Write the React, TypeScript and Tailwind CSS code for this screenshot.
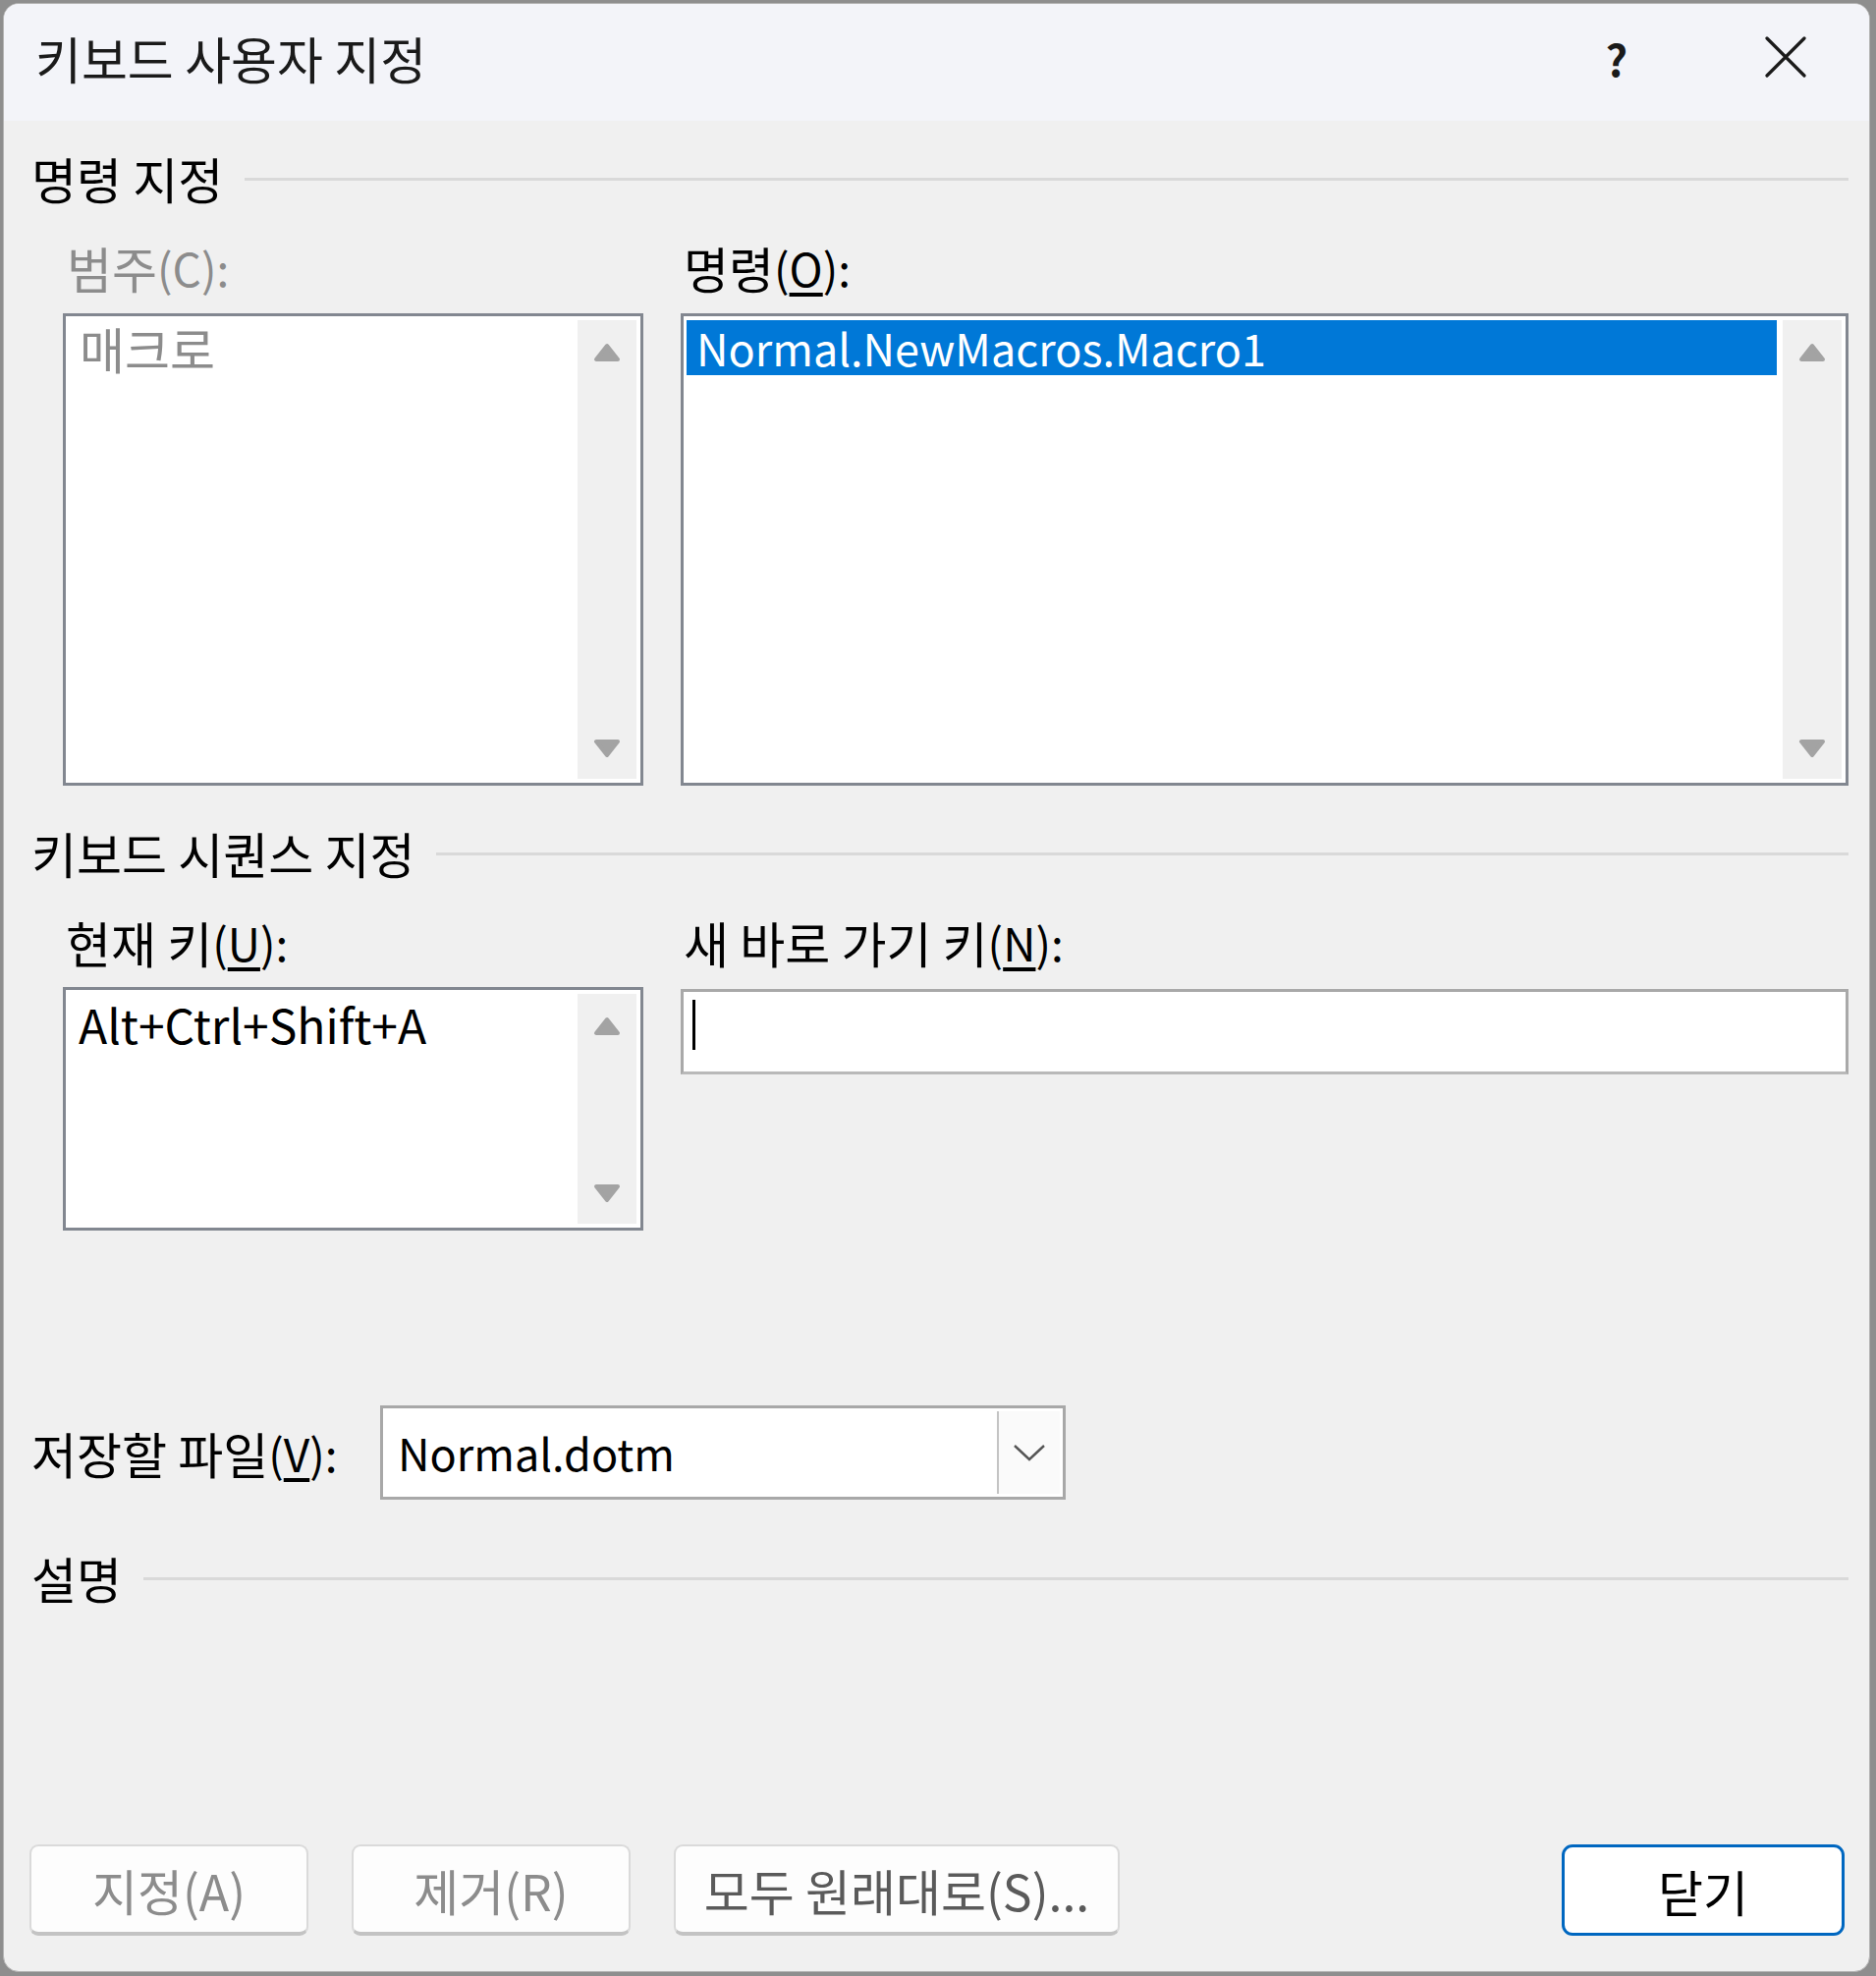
import React from 'react'

const FONT = "font-['Noto_Sans_CJK_KR','Noto_Sans',sans-serif]"

function Arrow({ down }: { down?: boolean }) {
  return (
    <svg width="30" height="22" viewBox="0 0 30 22">
      <polygon
        points={down ? '4,4 26,4 15,18' : '4,18 26,18 15,4'}
        fill="#a3a3a3"
        stroke="#a3a3a3"
        strokeWidth="4"
        strokeLinejoin="round"
      />
    </svg>
  )
}

function ScrollCol() {
  return (
    <div className="w-[60px] bg-[#f0f0f0] flex flex-col items-center justify-between pt-[22px] pb-[20px]">
      <Arrow />
      <Arrow down />
    </div>
  )
}

function SectionHeader({ label }: { label: string }) {
  return (
    <div className="flex items-center h-[56px]">
      <span className="text-black">{label}</span>
      <div className="flex-1 ml-[22px] h-[3px] bg-[#d9d9d9] mt-[2px]" />
    </div>
  )
}

function Btn({ label, muted, primary, w }: { label: string; muted?: boolean; primary?: boolean; w: string }) {
  if (primary) {
    return (
      <button className={`${w} h-[93px] rounded-[11px] border-[3px] border-[#0067c0] bg-white text-black flex items-center justify-center`}>
        {label}
      </button>
    )
  }
  return (
    <button
      className={`${w} h-[93px] rounded-[9px] border-2 border-[#dadada] border-b-[4px] border-b-[#c3c3c3] bg-[#fdfdfd] flex items-center justify-center ${muted ? 'text-[#8c8c8c]' : 'text-[#5a5a5a]'}`}
    >
      {label}
    </button>
  )
}

export default function App() {
  return (
    <div className={`w-[1910px] h-[2012px] bg-[#8e8e8e] pt-[3px] pl-[3px] ${FONT} text-[50px] leading-[56px]`}>
      <div className="w-[1901px] h-[2005px] rounded-[16px] border border-[#b4b4b4] bg-[#f0f0f0] overflow-hidden flex flex-col">
        {/* Title bar */}
        <div className="h-[119px] bg-[#f3f4f9] flex items-center pl-[32px] pr-[64px]">
          <span className="text-[#1a1a1a] -mt-[10px] text-[51px]">키보드 사용자 지정</span>
          <span className="ml-auto text-[#1a1a1a] font-bold -mt-[10px] text-[44px]">?</span>
          <svg className="ml-[140px] -mt-[12px]" width="42" height="42" viewBox="0 0 42 42">
            <path d="M2 2 L40 40 M40 2 L2 40" stroke="#1a1a1a" strokeWidth="3.2" strokeLinecap="round" />
          </svg>
        </div>

        {/* Body */}
        <div className="flex-1 flex flex-col pl-[28px] pr-[21px]">
          <div className="mt-[30px]">
            <SectionHeader label="명령 지정" />
          </div>

          <div className="flex pl-[32px] gap-[38px] mt-[35px]">
            <div className="w-[591px] flex flex-col">
              <div className="h-[56px] flex items-center pl-[4px] text-[#8c8c8c]">
                범주<span className="text-[46px]">(C):</span>
              </div>
              <div className="mt-[19px] h-[481px] border-[3px] border-[#828790] bg-white flex p-[4px] pl-0">
                <div className="flex-1 pl-[14px] text-[#8c8c8c]">매크로</div>
                <ScrollCol />
              </div>
            </div>
            <div className="flex-1 flex flex-col">
              <div className="h-[56px] flex items-center pl-[3px] text-black">
                명령<span className="text-[46px]">(<span className="underline underline-offset-[6px]">O</span>):</span>
              </div>
              <div className="mt-[19px] h-[481px] border-[3px] border-[#828790] bg-white flex p-[4px] pl-[3px]">
                <div className="flex-1 pr-[6px]">
                  <div className="h-[56px] bg-[#0078d7] text-white pl-[10px] text-[45px] flex items-center">
                    Normal.NewMacros.Macro1
                  </div>
                </div>
                <ScrollCol />
              </div>
            </div>
          </div>

          <div className="mt-[40px]">
            <SectionHeader label="키보드 시퀀스 지정" />
          </div>

          <div className="flex pl-[32px] gap-[38px] mt-[35px]">
            <div className="w-[591px] flex flex-col">
              <div className="h-[56px] flex items-center pl-[3px] text-black">
                현재 키<span className="text-[46px]">(<span className="underline underline-offset-[6px]">U</span>):</span>
              </div>
              <div className="mt-[18px] h-[248px] border-[3px] border-[#828790] bg-white flex p-[4px] pl-0">
                <div className="flex-1 pl-[13px] pt-[2px] text-black text-[48px]">Alt+Ctrl+Shift+A</div>
                <ScrollCol />
              </div>
            </div>
            <div className="flex-1 flex flex-col">
              <div className="h-[56px] flex items-center pl-[3px] text-black">
                새 바로 가기 키<span className="text-[46px]">(<span className="underline underline-offset-[6px]">N</span>):</span>
              </div>
              <div className="mt-[20px] h-[87px] border-[3px] border-[#a9a9a9] border-b-[#b9b9b9] bg-white pl-[9px] pt-[8px]">
                <div className="w-[3px] h-[51px] bg-black" />
              </div>
            </div>
          </div>

          <div className="flex items-center mt-[178px]">
            <span className="h-[56px] flex items-center text-black w-[355px]">
              저장할 파일<span className="text-[46px]">(<span className="underline underline-offset-[6px]">V</span>):</span>
            </span>
            <div className="w-[698px] h-[96px] border-[3px] border-[#a8a8a8] bg-white flex">
              <div className="flex-1 flex items-center pl-[15px] text-black text-[45px]">Normal.dotm</div>
              <div className="w-[64px] my-[3px] mr-[3px] border-l-2 border-[#c4c4c4] bg-[#fafafa] flex items-center justify-center">
                <svg width="34" height="20" viewBox="0 0 34 20">
                  <path d="M2 3 L17 17 L32 3" fill="none" stroke="#555" strokeWidth="2.4" />
                </svg>
              </div>
            </div>
          </div>

          <div className="mt-[51px]">
            <SectionHeader label="설명" />
          </div>

          <div className="mt-[244px] flex items-center -ml-[2px]">
            <Btn label="지정(A)" muted w="w-[284px]" />
            <div className="ml-[44px]">
              <Btn label="제거(R)" muted w="w-[284px]" />
            </div>
            <div className="ml-[44px]">
              <Btn label="모두 원래대로(S)..." w="w-[454px]" />
            </div>
            <div className="ml-auto mr-[4px]">
              <Btn label="닫기" primary w="w-[288px]" />
            </div>
          </div>
        </div>
      </div>
    </div>
  )
}
